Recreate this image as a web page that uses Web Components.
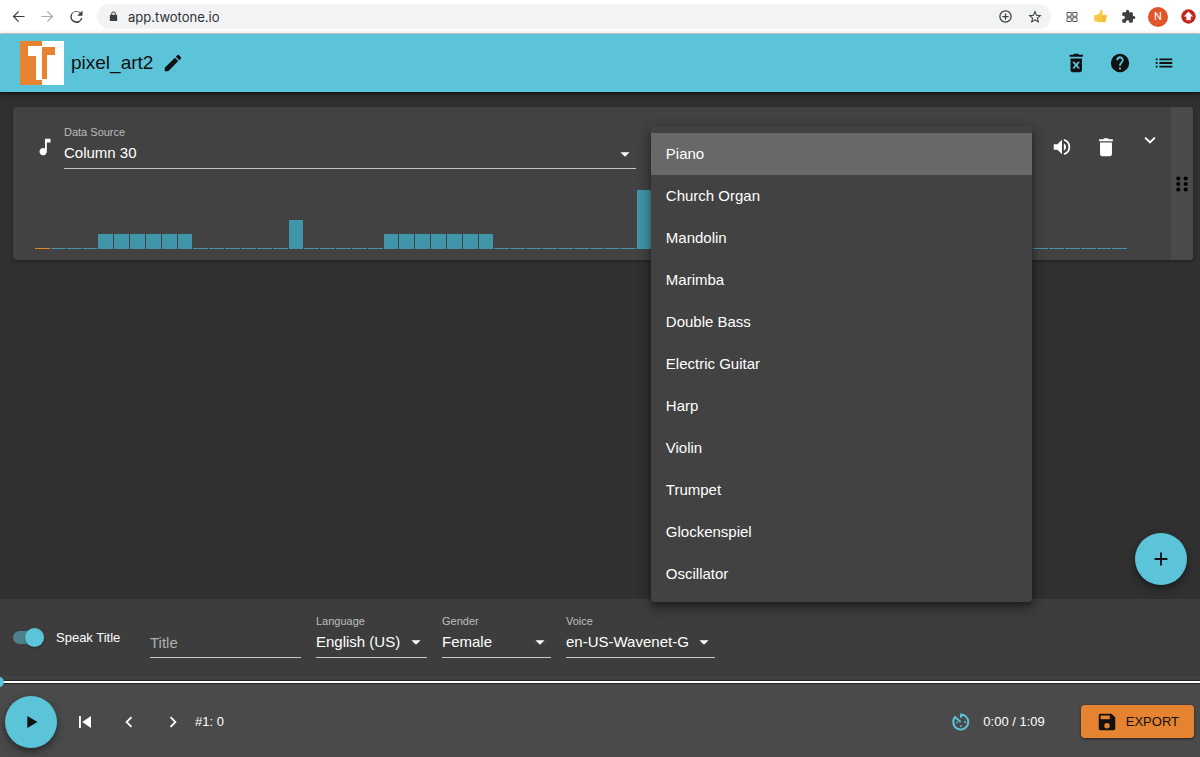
<!DOCTYPE html>
<html lang="en">
<head>
<meta charset="utf-8">
<meta name="viewport" content="width=device-width, initial-scale=1">
<title>TwoTone</title>
<style>
  html, body { margin: 0; height: 100%; }
  body {
    --accent: #5cc4d9;
    --orange: #e68331;
    --bar: #4096a8;
    --bg: #303030;
    --card: #424242;
    font-family: "Liberation Sans", Arial, sans-serif;
    color: #fff;
    background: var(--bg);
  }
</style>
</head>
<body>
<two-tone-app></two-tone-app>
<script>
const ICONS = {
  back: '<path d="M20.500 11.200H7l5.800-5.800L11.600 4.200l-7.900 7.800 7.900 7.800 1.200-1.200L7 12.800h13.500z"/>',
  forward: '<path d="M3.500 11.200H17l-5.800-5.800 1.200-1.200 7.900 7.800-7.900 7.800-1.200-1.200 5.800-5.800H3.500z"/>',
  reload: '<path d="M17.650 6.350A8.500 8.500 0 1 0 20.300 14h-1.900A6.700 6.700 0 1 1 12 5.300c1.900 0 3.300.8 4.500 2.100L13 11h7.500V3.500z"/>',
  lock: '<path d="M18 8h-1V6A5 5 0 0 0 7 6v2H6a2 2 0 0 0-2 2v10c0 1.100.9 2 2 2h12a2 2 0 0 0 2-2V10a2 2 0 0 0-2-2zM9 6a3 3 0 1 1 6 0v2H9z"/>',
  zoom: '<path d="M13 7h-2v4H7v2h4v4h2v-4h4v-2h-4zm-1-5a10 10 0 1 0 0 20 10 10 0 0 0 0-20zm0 18a8 8 0 1 1 0-16 8 8 0 0 1 0 16z"/>',
  star: '<path d="m22 9.240-7.190-.62L12 2 9.190 8.630 2 9.240l5.460 4.730L5.820 21 12 17.270 18.180 21l-1.630-7.030zM12 15.400l-3.760 2.270 1-4.280-3.320-2.880 4.380-.38L12 6.100l1.710 4.040 4.380.38-3.320 2.880 1 4.280z"/>',
  grid: '<g fill="none" stroke="currentColor" stroke-width="1.700"><path d="M2 3h8.500v7.500H2zM13.500 3H22v7.500h-8.500zM2 13.500h8.500V21H2zM13.500 13.500H22V21h-8.500z"/></g>',
  thumb: '<path fill="#f9c646" d="M2 11c0-1 .7-1.500 2-1.500h3L11 6l1-4c.3-1.400 3.400-.8 3.500 2 .1 2-.8 3.800-1 5h6c2.500 0 2.500 3.300.6 3.500 1.700.5 1.500 3-.3 3.300 1.300.7.9 2.700-.7 2.900.8 1.200 0 2.600-1.500 2.600H11c-2 0-3-.8-4-1.300H4c-1.300 0-2-.6-2-2z"/><path d="M14 12.500h7M14.500 15.800h6M14.500 18.800h5" stroke="#e5a835" fill="none"/>',
  puzzle: '<path d="M20.500 11H19V7a2 2 0 0 0-2-2h-4V3.500a2.500 2.500 0 0 0-5 0V5H4a2 2 0 0 0-2 2v3.800h1.500a2.700 2.700 0 0 1 0 5.400H2V20c0 1.100.9 2 2 2h3.800v-1.500a2.700 2.700 0 0 1 5.400 0V22H17a2 2 0 0 0 2-2v-4h1.500a2.500 2.500 0 0 0 0-5z"/>',
  update: '<circle cx="12" cy="12" r="11.500" fill="#c5221f"/><path fill="#fff" d="M12 4 4.500 12H8.500v6h7v-6h4z"/>',
  pencil: '<path d="M3 17.250V21h3.750L17.810 9.940l-3.750-3.750zM20.710 7.040a1 1 0 0 0 0-1.410l-2.340-2.340a1 1 0 0 0-1.410 0l-1.830 1.830 3.750 3.750z"/>',
  binx: '<path fill-rule="evenodd" d="M6 7h12.500v13a2 2 0 0 1-2 2H8a2 2 0 0 1-2-2zm2 3.500 2.700 3.700L8 18h2.500l1.700-2.400L14 18h2.400l-2.700-3.800 2.700-3.700H14l-1.800 2.400-1.700-2.400zM5 3h4l1-1h4.500l1 1h4v2.200H5z"/>',
  help: '<path d="M12 2a10 10 0 1 0 0 20 10 10 0 0 0 0-20zm1 17h-2v-2h2zm2.070-7.750-.9.920A4 4 0 0 0 13 15h-2v-.5c0-1.100.45-2.100 1.170-2.830l1.240-1.260A2 2 0 1 0 10 9H8a4 4 0 1 1 7.070 2.250z"/>',
  list: '<path d="M3 13h2v-2H3zm0 4h2v-2H3zm0-8h2V7H3zm4 4h14v-2H7zm0 4h14v-2H7zM7 7v2h14V7z"/>',
  note: '<path d="M12 3v10.550A4 4 0 1 0 14 17V7h4V3z"/>',
  volume: '<path d="M3 9v6h4l5 5V4L7 9zm13.500 3A4.500 4.500 0 0 0 14 7.970v8.050A4.470 4.470 0 0 0 16.500 12zM14 3.230v2.060a7 7 0 0 1 0 13.420v2.060a9 9 0 0 0 0-17.540z"/>',
  bin: '<path d="M5.500 7h13v13a2 2 0 0 1-2 2h-9a2 2 0 0 1-2-2zM4.500 3.500H9l1-1h4l1 1h4.500v2.300h-15z"/>',
  expand: '<path d="M16.600 8.600 12 13.200 7.400 8.600 6 10l6 6 6-6z"/>',
  left: '<path d="M15.400 7.400 14 6l-6 6 6 6 1.400-1.400-4.600-4.600z"/>',
  right: '<path d="M10 6 8.600 7.400l4.600 4.600-4.600 4.600L10 18l6-6z"/>',
  first: '<path d="M5.500 5.500h2v13h-2zM9 12l9.500 6.500v-13z"/>',
  play: '<path d="M8 5.500v13l11-6.500z"/>',
  plus: '<path d="M19 13h-6v6h-2v-6H5v-2h6V5h2v6h6z"/>',
  drag: '<g><circle cx="8" cy="6" r="2.300"/><circle cx="16" cy="6" r="2.300"/><circle cx="8" cy="12" r="2.300"/><circle cx="16" cy="12" r="2.300"/><circle cx="8" cy="18" r="2.300"/><circle cx="16" cy="18" r="2.300"/></g>',
  save: '<path d="M17 3H5a2 2 0 0 0-2 2v14c0 1.100.9 2 2 2h14a2 2 0 0 0 2-2V7zm-5 16a3 3 0 1 1 0-6 3 3 0 0 1 0 6zm3-10H5V5h10z"/>',
  timer: '<path fill="none" stroke="currentColor" stroke-width="2.300" d="M12 7V3a9 9 0 1 1-7 3l6.500 6"/><circle cx="17" cy="12" r="1.100"/><circle cx="7" cy="12.500" r="1.100"/><circle cx="12" cy="17" r="1.100"/>',
  caret: '<path d="m7 10 5 5 5-5z"/>'
};

const icon = (name, size = 22) =>
  `<svg viewBox="0 0 24 24" width="${size}" height="${size}" fill="currentColor" aria-hidden="true">${ICONS[name]}</svg>`;

const BASE = `
  *, *::before, *::after { box-sizing: border-box; }
  svg { display: block; flex: none; }
  button { font: inherit; color: inherit; background: none; border: 0; padding: 0; margin: 0; cursor: pointer; }
`;

function define(name, css, markup) {
  customElements.define(name, class extends HTMLElement {
    constructor() {
      super();
      this.attachShadow({ mode: 'open' });
    }
    connectedCallback() {
      this.shadowRoot.innerHTML = `<style>${BASE}${css}</style>` +
        (typeof markup === 'function' ? markup(this) : markup);
    }
  });
}

/* Square icon-only button */
define('icon-button', `
  :host { display: block; flex: none; }
  button { display: grid; place-items: center; width: 44px; height: 44px; }
`, el => `<button type="button" aria-label="${el.getAttribute('label')}">${icon(el.getAttribute('icon'))}</button>`);

/* Floating action button */
define('fab-button', `
  :host { display: block; flex: none; }
  button {
    display: grid; place-items: center; width: 52px; height: 52px; border-radius: 50%;
    background: var(--accent); color: #111;
    box-shadow: 0 3px 5px rgba(0,0,0,.3), 0 5px 12px rgba(0,0,0,.2);
  }
`, el => `<button type="button" aria-label="${el.getAttribute('label')}">${icon(el.getAttribute('icon'))}</button>`);

/* Labelled drop-down with an underline */
define('select-field', `
  :host { display: block; min-width: 0; }
  label { display: block; font-size: 11px; line-height: 14px; color: #bdbdbd; }
  .box { display: grid; align-items: start; border-bottom: 1px solid #c6c6c6; height: 30px; }
  select {
    grid-area: 1 / 1; appearance: none; width: 100%; height: 27px; border: 0; padding: 0; margin: 0;
    background: transparent; color: #fff; font: 15px "Liberation Sans", Arial, sans-serif; outline: 0;
  }
  svg { grid-area: 1 / 1; place-self: center end; pointer-events: none; }
`, el => `
  <label for="s">${el.getAttribute('label')}</label>
  <div class="box"><select id="s"><option>${el.getAttribute('value')}</option></select>${icon('caret')}</div>`);

define('browser-bar', `
  :host {
    display: flex; align-items: center; height: 34px; background: #fff; color: #3c4043;
    border-bottom: 1px solid #dcdcdc; padding: 0 4px 0 10px; gap: 13px;
  }
  button { display: grid; place-items: center; flex: none; width: 16px; }
  .fwd { color: #aaa; }
  nav { display: flex; gap: 13px; }
  .address {
    flex: 1; display: flex; align-items: center; gap: 14px; height: 25px; border-radius: 13px;
    background: #f1f3f4; padding: 0 8px 0 11px;
  }
  input {
    flex: 1; min-width: 0; border: 0; padding: 0; margin-left: -5px; background: none; outline: 0;
    color: #303134; font: 13px Inter, sans-serif;
  }
  .tools { display: flex; align-items: center; gap: 12px; }
  .tools button { width: 16px; }
  .tools .avatar {
    width: 20px; height: 20px; border-radius: 50%; background: #e2542a; color: #fff;
    font: 11px Roboto, sans-serif;
  }
`, `
  <nav aria-label="History">
    <button type="button" aria-label="Back">${icon('back', 17)}</button>
    <button type="button" class="fwd" aria-label="Forward">${icon('forward', 17)}</button>
    <button type="button" aria-label="Reload">${icon('reload', 17)}</button>
  </nav>
  <div class="address">
    ${icon('lock', 11)}
    <input type="text" value="app.twotone.io" aria-label="Address">
    <button type="button" aria-label="Zoom">${icon('zoom', 15)}</button>
    <button type="button" aria-label="Bookmark">${icon('star', 16)}</button>
  </div>
  <div class="tools">
    <button type="button" aria-label="Tabs">${icon('grid', 12)}</button>
    <button type="button" aria-label="Like">${icon('thumb', 15)}</button>
    <button type="button" aria-label="Extensions">${icon('puzzle', 15)}</button>
    <button type="button" class="avatar" aria-label="Profile">N</button>
    <button type="button" aria-label="Update">${icon('update', 15)}</button>
  </div>`);

define('app-header', `
  :host {
    display: flex; align-items: center; height: 58px; padding: 0 14px 0 20px;
    background: var(--accent); color: #111; position: relative;
    box-shadow: 0 1px 2px #111, 0 2px 6px rgba(0,0,0,.35);
  }
  h1 { margin: 0 -2px 0 7px; font-size: 19px; line-height: 24px; font-weight: 400; }
  .actions { display: flex; margin-left: auto; }
`, `
  <svg viewBox="0 0 44 44" width="44" height="44" role="img" aria-label="TwoTone logo">
    <path fill="#fff" d="M0 0h44v44H0z"/><path fill="#e68331" d="M0 0h22v44H0z"/>
    <path fill="#e68331" d="M22 6h13v8h-8v24h-5z"/>
    <path fill="#fff" d="M8 5h14v34h-6V15H8z"/>
  </svg>
  <h1>pixel_art2</h1>
  <icon-button icon="pencil" label="Rename"></icon-button>
  <div class="actions">
    <icon-button icon="binx" label="Clear project"></icon-button>
    <icon-button icon="help" label="Help"></icon-button>
    <icon-button icon="list" label="Menu"></icon-button>
  </div>`);

/* One bar for each row of the data; the first is the current one */
define('data-chart', `
  :host { display: flex; align-items: flex-end; gap: 1px; height: 59px; }
  i { flex: 1; background: var(--bar); height: 1px; }
  i.low { height: 15px; } i.mid { height: 29px; } i.high { height: 59px; }
  i.current { background: var(--orange); }
`, () => Array.from({ length: 69 }, (_, n) => {
  const c = n === 0 ? 'current' : (n > 3 && n < 10) || (n > 21 && n < 29) ? 'low' : n === 16 ? 'mid' : n === 38 ? 'high' : '';
  return `<i class="${c}"></i>`;
}).join(''));

define('instrument-menu', `
  :host {
    display: block; padding: 7px 0; background: var(--card); border-radius: 4px;
    box-shadow: 0 4px 5px rgba(0,0,0,.2), 0 6px 14px rgba(0,0,0,.24), 0 3px 14px rgba(0,0,0,.2);
  }
  button { display: block; width: 100%; height: 42px; padding: 0 15px 2px; text-align: left; font-size: 15px; }
  button[aria-selected="true"] { background: #686868; }
`, () => `<div role="listbox" aria-label="Instrument">` +
  ['Piano', 'Church Organ', 'Mandolin', 'Marimba', 'Double Bass', 'Electric Guitar', 'Harp', 'Violin', 'Trumpet', 'Glockenspiel', 'Oscillator']
    .map((t, n) => `<button type="button" role="option" aria-selected="${n === 0}">${t}</button>`).join('') + `</div>`);

define('track-card', `
  :host {
    display: grid; grid-template-columns: 1fr 22px; background: var(--card); border-radius: 4px;
    box-shadow: 0 1px 3px rgba(0,0,0,.4);
  }
  .top { display: grid; grid-template-columns: 51px 3fr 15px 2fr 139px; padding-top: 18px; height: 83px; }
  .note { padding: 11px 0 0 21px; }
  .anchor { position: relative; grid-column: 4; }
  instrument-menu { position: absolute; z-index: 5; top: 1px; left: 0; right: 0; }
  .actions { display: flex; padding-left: 8px; }
  .fold { margin-top: -7px; }
  data-chart { margin: 0 44px 11px 22px; }
  .handle { display: grid; place-items: center; width: 22px; background: #4b4b4b; color: #000; border-radius: 0 4px 4px 0; cursor: grab; }
`, `
  <div>
    <div class="top">
      <div class="note">${icon('note')}</div>
      <select-field label="Data Source" value="Column 30"></select-field>
      <div class="anchor"><instrument-menu></instrument-menu></div>
      <div class="actions">
        <icon-button icon="volume" label="Mute"></icon-button>
        <icon-button icon="bin" label="Delete track"></icon-button>
        <icon-button class="fold" icon="expand" label="Expand"></icon-button>
      </div>
    </div>
    <data-chart></data-chart>
  </div>
  <button type="button" class="handle" aria-label="Reorder">${icon('drag')}</button>`);

define('speech-settings', `
  :host { display: flex; align-items: center; gap: 15px; height: 77px; padding: 0 13px; background: #3d3d3d; }
  .switch { display: flex; align-items: center; gap: 12px; width: 122px; font-size: 13px; white-space: nowrap; }
  .switch input {
    appearance: none; margin: 0; width: 31px; height: 13px; display: flex; align-items: center; justify-content: flex-end;
    background: #4c828d; border-radius: 7px;
  }
  .switch input::before { content: ""; flex: none; width: 19px; height: 19px; border-radius: 50%; background: var(--accent); box-shadow: 0 1px 2px rgba(0,0,0,.4); }
  .title {
    width: 151px; height: 30px; margin-top: 10px; padding: 0; border: 0; border-bottom: 1px solid #c6c6c6;
    background: none; color: #fff; outline: 0; font: 15px "Liberation Sans", Arial, sans-serif;
  }
  .title::placeholder { color: #b0b0b0; opacity: 1; }
  select-field { margin-bottom: 4px; }
  .w1 { width: 111px; } .w2 { width: 109px; } .w3 { width: 149px; }
`, `
  <label class="switch"><input type="checkbox" role="switch" checked>Speak Title</label>
  <input class="title" type="text" placeholder="Title" aria-label="Title">
  <select-field class="w1" label="Language" value="English (US)"></select-field>
  <select-field class="w2" label="Gender" value="Female"></select-field>
  <select-field class="w3" label="Voice" value="en-US-Wavenet-G"></select-field>`);

define('player-bar', `
  :host { display: block; background: #4a4a4a; }
  .seek { display: flex; align-items: center; height: 12px; overflow: hidden; background: linear-gradient(#424242 50%, #4a4a4a 50%); }
  .seek input { appearance: none; flex: 1; height: 12px; margin: 0 -6px; background: none; }
  .seek input::-webkit-slider-runnable-track { height: 2px; background: #fff; box-shadow: 0 0 1px 1px #222; }
  .seek input::-webkit-slider-thumb { appearance: none; width: 10px; height: 10px; margin-top: -4px; border-radius: 50%; background: var(--accent); }
  .row { display: flex; align-items: center; height: 69px; padding: 0 6px 2px 5px; font-size: 13px; }
  .steps { display: flex; margin: 0 0 0 6px; }
  .time { display: flex; align-items: center; gap: 12px; margin-left: auto; }
  .time svg { color: var(--accent); }
  .export {
    display: flex; align-items: center; gap: 8px; height: 33px; margin-left: 36px; padding: 0 15px;
    border-radius: 4px; background: var(--orange); color: #111; box-shadow: 0 1px 3px rgba(0,0,0,.5);
  }
`, `
  <div class="seek"><input type="range" min="0" max="69" value="0" aria-label="Position"></div>
  <div class="row">
    <fab-button icon="play" label="Play"></fab-button>
    <div class="steps">
      <icon-button icon="first" label="First"></icon-button>
      <icon-button icon="left" label="Previous"></icon-button>
      <icon-button icon="right" label="Next"></icon-button>
    </div>
    <span>#1: 0</span>
    <div class="time">${icon('timer', 20)}<span>0:00 / 1:09</span></div>
    <button type="button" class="export">${icon('save')}<span>EXPORT</span></button>
  </div>`);

define('two-tone-app', `
  :host { display: flex; flex-direction: column; min-height: 100vh; }
  main { flex: 1; position: relative; padding: 15px 7px 15px 13px; }
  fab-button { position: absolute; right: 13px; bottom: 14px; }
`, `
  <browser-bar></browser-bar>
  <app-header></app-header>
  <main>
    <track-card></track-card>
    <fab-button icon="plus" label="Add track"></fab-button>
  </main>
  <footer>
    <speech-settings></speech-settings>
    <player-bar></player-bar>
  </footer>`);
</script>
</body>
</html>
